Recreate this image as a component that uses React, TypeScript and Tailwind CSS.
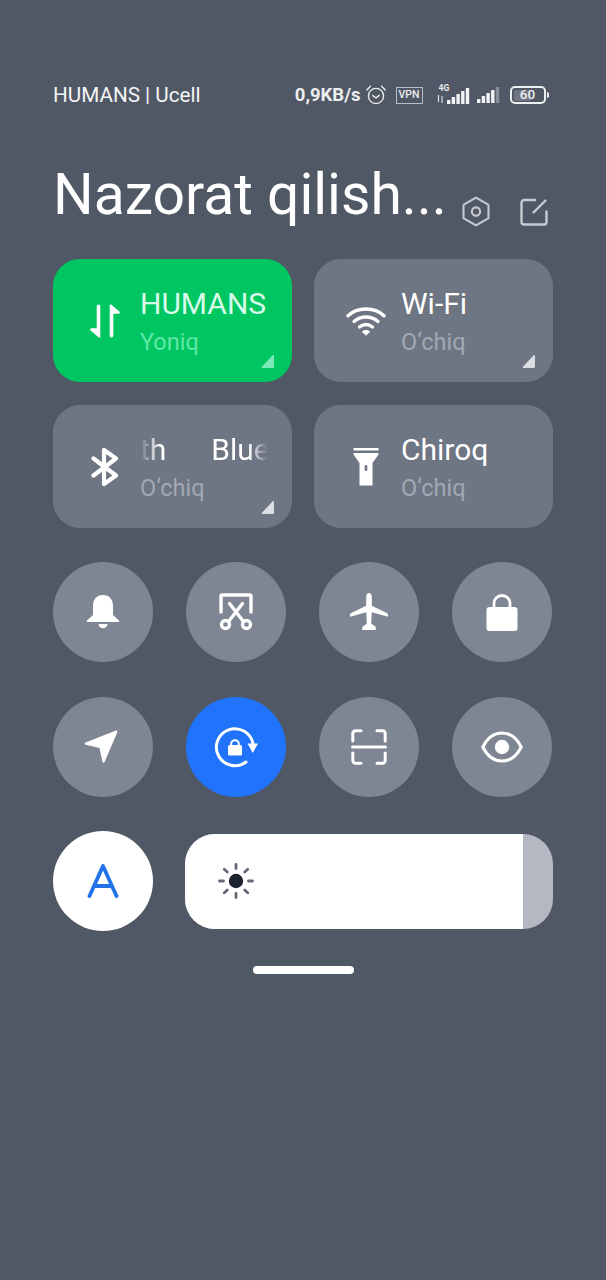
import type { ReactNode } from 'react'

function Signal({ bars, className }: { bars: number; className?: string }) {
  const heights = [4, 7, 10, 13, 16]
  return (
    <svg width="23" height="16" viewBox="0 0 23 16" className={className}>
      {heights.map((h, i) => (
        <rect
          key={i}
          x={i * 4.7}
          y={16 - h}
          width="3.4"
          height={h}
          rx="0.6"
          fill="#f2f3f5"
          opacity={i < bars ? 1 : 0.35}
        />
      ))}
    </svg>
  )
}

function StatusBar() {
  return (
    <div className="flex h-6 items-center justify-between pl-[53px] pr-[57px]">
      <span className="text-[20.7px] leading-6 text-[#f4f5f6]">HUMANS | Ucell</span>
      <div className="flex items-center text-[#eceef0]">
        <span className="text-[18.5px] font-bold leading-6">0,9KB/s</span>
        <svg width="22" height="22" viewBox="0 0 22 22" fill="none" stroke="currentColor" strokeWidth="1.4" className="ml-[4px]">
          <circle cx="11" cy="12" r="7.6" />
          <path d="M7.8 11.6 11 14l3.2-2.6M1.8 6 5.4 2.2M20.2 6l-3.6-3.8" strokeLinecap="round" strokeLinejoin="round" />
        </svg>
        <span className="ml-[9px] flex h-[17px] w-[27px] items-center justify-center border border-[#b9bdc4] text-[10.5px] font-medium leading-none">
          VPN
        </span>
        <div className="relative ml-[14px] flex h-[17px] w-[33px] items-end justify-end">
          <span className="absolute left-[2px] top-[-4px] text-[8.5px] font-bold leading-[10px]">4G</span>
          <svg width="7" height="8" viewBox="0 0 7 8" className="absolute bottom-[1px] left-0">
            <path d="M1.5 0v7M5 1v7" stroke="#d8dbdf" strokeWidth="1.2" />
          </svg>
          <Signal bars={5} />
        </div>
        <Signal bars={4} className="ml-[7px]" />
        <div className="ml-[10px] flex items-center">
          <span className="flex h-[18px] w-[36px] items-center justify-center rounded-[5px] border-2 border-[#eceef0] bg-[linear-gradient(90deg,#6f7582_60%,transparent_60%)] bg-clip-content p-[1.5px] text-[13.5px] font-medium leading-none">
            60
          </span>
          <span className="ml-[1.5px] h-[6px] w-[2px] rounded-r-sm bg-[#eceef0]" />
        </div>
      </div>
    </div>
  )
}

function Header() {
  return (
    <div className="mt-[55px] flex items-start pl-[53px]">
      <h1 className="text-[57px] font-normal leading-[66px] text-white">Nazorat qilish...</h1>
      <svg width="30" height="33" viewBox="0 0 32 34" fill="none" stroke="#c8cbd1" strokeWidth="2.2" className="ml-[14px] mt-[33px]">
        <path d="M16 2.200 28.600 9.400a1.500 1.500 0 0 1 .7 1.300v12.600a1.500 1.500 0 0 1-.7 1.300L16 31.800 3.400 24.600a1.500 1.500 0 0 1-.7-1.300V10.700a1.500 1.500 0 0 1 .7-1.300Z" strokeLinejoin="round" />
        <circle cx="16" cy="17" r="4.400" />
      </svg>
      <svg width="28" height="28" viewBox="0 0 28 28" fill="none" stroke="#c8cbd1" strokeWidth="2.400" strokeLinecap="round" className="ml-[29px] mt-[36px]">
        <path d="M15 2H4a2.500 2.500 0 0 0-2.500 2.500V24A2.500 2.500 0 0 0 4 26.500h20a2.500 2.500 0 0 0 2.500-2.500V13.500" />
        <path d="M25.500 2.500 13.500 14.500" />
      </svg>
    </div>
  )
}

function Corner({ className }: { className: string }) {
  return (
    <svg width="14" height="14" viewBox="0 0 14 14" className={`absolute bottom-[13px] right-[17px] ${className}`}>
      <path d="M13 .8V11.500a1.500 1.500 0 0 1-1.500 1.500H1.500a.8.8 0 0 1-.6-1.300L11.700.3a.8.8 0 0 1 1.300.5Z" fill="currentColor" />
    </svg>
  )
}

function Tile({
  icon,
  title,
  sub,
  on,
  corner,
}: {
  icon: ReactNode
  title: ReactNode
  sub: string
  on?: boolean
  corner?: boolean
}) {
  return (
    <div className={`relative flex h-[123px] w-[239px] items-center rounded-[27px] ${on ? 'bg-[#00c662]' : 'bg-[#6e7583]'}`}>
      <div className="flex w-[87px] shrink-0 justify-center pl-[16px] text-white">{icon}</div>
      <div className="min-w-0 flex-1 pt-[2px]">
        <div className={`h-[34px] text-[30px] leading-[34px] ${on ? 'text-[#d6fbe9]' : 'text-white'}`}>{title}</div>
        <div className={`mt-[6px] text-[23.5px] leading-[30px] ${on ? 'text-[#5fe8a8]' : 'text-[#a2a8b4]'}`}>{sub}</div>
      </div>
      {corner && <Corner className={on ? 'text-[#7ceabb]' : 'text-[#dcdee3]'} />}
    </div>
  )
}

function Round({ children, active }: { children: ReactNode; active?: boolean }) {
  return (
    <div className={`flex h-[100px] w-[100px] items-center justify-center rounded-full text-white ${active ? 'bg-[#2273fb]' : 'bg-[#7e8593]'}`}>
      {children}
    </div>
  )
}

const DataIcon = (
  <svg width="32" height="36" viewBox="0 0 32 36" fill="currentColor">
    <path d="M9.500 1.500a1.800 1.800 0 0 1 1.800 1.800V34.500h-1.400L1.600 27.500c-1-1-.3-2.300.9-2.300H7.700V3.300a1.800 1.800 0 0 1 1.800-1.800Z" />
    <path d="M22.500 34.500a1.800 1.800 0 0 1-1.800-1.800V1.500h1.400l8.300 7c1 1 .3 2.300-.9 2.300H24.300v21.900a1.800 1.800 0 0 1-1.800 1.800Z" />
  </svg>
)

const WifiIcon = (
  <svg width="40" height="32" viewBox="0 0 40 32" fill="none" stroke="currentColor" strokeWidth="3.400" strokeLinecap="round">
    <path d="M2 10.800C11.500 1.800 28.500 1.800 38 10.800" />
    <path d="M8 16.500c7-6 17-6 24 0" />
    <path d="M13.500 22c4-3 9-3 13 0" />
    <path d="M16.500 27.300a1 1 0 0 1 0-1.300c2-1.200 5-1.200 7 0a1 1 0 0 1 0 1.300l-3.500 3.500-3.500-3.500Z" fill="currentColor" stroke="none" />
  </svg>
)

const BluetoothIcon = (
  <svg width="28" height="38" viewBox="0 0 28 38" fill="none" stroke="currentColor" strokeWidth="4.200" strokeLinecap="round" strokeLinejoin="round">
    <path d="M2.500 10.500 25 27.500 13 36V2l12 8.500L2.500 27.500" />
  </svg>
)

const TorchIcon = (
  <svg width="26" height="38" viewBox="0 0 26 38" fill="currentColor">
    <rect x="0.500" y="0" width="25" height="2.500" />
    <path d="M.5 5h25v1.500L19.500 15v22.500h-13V15L.5 6.500Z" />
    <rect x="11.700" y="17" width="2.600" height="6" rx="1.300" fill="#6e7583" />
  </svg>
)

const BellIcon = (
  <svg width="34" height="36" viewBox="0 0 34 36" fill="currentColor">
    <path d="M17 1c6.500 0 10 4.800 10 10.500v9.500L33 26.600c.6.600.3 1.400-.5 1.400H1.500c-.8 0-1.100-.8-.5-1.400L7 21v-9.500C7 5.800 10.500 1 17 1Z" />
    <path d="M12.500 30h9c0 2.500-2 4.200-4.500 4.200S12.500 32.500 12.500 30Z" />
  </svg>
)

const ScissorIcon = (
  <svg width="34" height="38" viewBox="0 0 34 38" fill="none" stroke="currentColor" strokeWidth="3.400" strokeLinecap="round">
    <path d="M2 19V3.500A1.500 1.500 0 0 1 3.500 2h27A1.500 1.500 0 0 1 32 3.500V19" />
    <path d="M10.500 10.500 24 28M23.500 10.500 10 28" />
    <circle cx="6.500" cy="31.500" r="4" />
    <circle cx="27.500" cy="31.500" r="4" />
  </svg>
)

const PlaneIcon = (
  <svg width="38" height="38" viewBox="0 0 38 38" fill="currentColor">
    <path d="M19 0c1.800 0 2.800 2 2.800 4v8.700l15 7.200c.8.400 1.200 1 1.200 1.800v2.100L21.800 19.300l-.6 11.200 4 2.900c.4.300.6.700.6 1.100V37H12.200v-2.500c0-.4.200-.8.600-1.100l4-2.900-.6-11.200L0 23.800v-2.100c0-.8.400-1.400 1.200-1.800l15-7.200V4c0-2 1-4 2.800-4Z" />
  </svg>
)

const LockIcon = (
  <svg width="32" height="37" viewBox="0 0 32 37" fill="currentColor">
    <rect x="0.500" y="13" width="31" height="24" rx="3" />
    <path d="M8 14V9.500a8 8 0 0 1 16 0V14" fill="none" stroke="currentColor" strokeWidth="2.800" />
  </svg>
)

const NavIcon = (
  <svg width="34" height="34" viewBox="0 0 34 34" fill="currentColor" className="mr-[4px]">
    <path d="M32 .6c1-.3 1.700.4 1.400 1.400L20.600 32c-.4 1.200-2 1-2.200-.2L15.500 18 1.700 14.800C.5 14.500.3 13 1.500 12.600Z" />
  </svg>
)

const RotateIcon = (
  <svg width="44" height="42" viewBox="0 0 44 42" fill="none" stroke="currentColor" strokeWidth="3" strokeLinecap="round">
    <path d="M32 36A18.500 18.500 0 1 1 39 17.500" />
    <path d="M33.500 17.500h10.500l-5.200 9.500-5.300-9.500Z" fill="currentColor" stroke="none" />
    <rect x="14" y="19" width="14" height="10.500" rx="1.500" fill="currentColor" stroke="none" />
    <path d="M17.200 19.500v-1.500a3.800 3.800 0 0 1 7.600 0v1.500" strokeWidth="2" />
  </svg>
)

const ScanIcon = (
  <svg width="36" height="36" viewBox="0 0 36 36" fill="none" stroke="currentColor" strokeWidth="3" strokeLinecap="round" strokeLinejoin="round">
    <path d="M1.800 12V4.500a2.700 2.700 0 0 1 2.700-2.700H10M26 1.800h5.500a2.700 2.700 0 0 1 2.700 2.700V12M1.500 18h33M1.800 24v7.500a2.700 2.700 0 0 0 2.700 2.700H10M26 34.200h5.500a2.700 2.700 0 0 0 2.700-2.700V24" />
  </svg>
)

const EyeIcon = (
  <svg width="42" height="32" viewBox="0 0 42 32" fill="none" stroke="currentColor" strokeWidth="3">
    <path d="M1.800 16C6 7.500 13 2 21 2s15 5.500 19.200 14C36 24.500 29 30 21 30S6 24.500 1.800 16Z" strokeLinejoin="round" />
    <circle cx="21" cy="16" r="7.200" fill="currentColor" stroke="none" />
  </svg>
)

const SunIcon = (
  <svg width="36" height="36" viewBox="0 0 36 36" fill="none" stroke="#636875" strokeWidth="2.800" strokeLinecap="round">
    <path d="M18 1.500v4M18 30.500v4M1.500 18h4M30.500 18h4M6.300 6.300l3 2.800M26.700 26.900l3 2.800M6.300 29.700l3-2.800M26.700 9.100l3-2.800" />
    <circle cx="18" cy="18" r="7.200" fill="#1e2330" stroke="none" />
  </svg>
)

export default function App() {
  return (
    <div className="h-[1280px] w-[606px] overflow-hidden bg-[#515865] pt-[83px] font-['Roboto',sans-serif]">
      <StatusBar />
      <Header />

      <div className="mt-[31px] grid grid-cols-[239px_239px] gap-x-[22px] gap-y-[23px] pl-[53px]">
        <Tile on corner icon={DataIcon} title="HUMANS" sub="Yoniq" />
        <Tile corner icon={WifiIcon} title="Wi-Fi" sub="O‘chiq" />
        <Tile
          corner
          icon={BluetoothIcon}
          sub="O‘chiq"
          title={
            <div className="flex w-[128px] overflow-hidden [mask-image:linear-gradient(to_right,transparent_0,black_20px,black_calc(100%-20px),transparent_100%)]">
              <span>th</span>
              <span className="ml-[45px]">Blue</span>
            </div>
          }
        />
        <Tile icon={TorchIcon} title="Chiroq" sub="O‘chiq" />
      </div>

      <div className="mt-[34px] grid grid-cols-[repeat(4,100px)] gap-x-[33px] gap-y-[35px] pl-[53px]">
        <Round>{BellIcon}</Round>
        <Round>{ScissorIcon}</Round>
        <Round>{PlaneIcon}</Round>
        <Round>{LockIcon}</Round>
        <Round>{NavIcon}</Round>
        <Round active>{RotateIcon}</Round>
        <Round>{ScanIcon}</Round>
        <Round>{EyeIcon}</Round>
      </div>

      <div className="mt-[34px] flex items-center pl-[53px]">
        <div className="flex h-[100px] w-[100px] items-center justify-center rounded-full bg-white">
          <svg width="32" height="34" viewBox="0 0 32 34" fill="none" stroke="#2273e8" strokeWidth="3.800" strokeLinecap="round" strokeLinejoin="round">
            <path d="M2.500 32 16 2l13.500 30M7.500 22h17" />
          </svg>
        </div>
        <div className="ml-[32px] flex h-[95px] w-[368px] overflow-hidden rounded-[30px] bg-[#b5b8c3]">
          <div className="flex w-[338px] items-center bg-white pl-[33px]">{SunIcon}</div>
        </div>
      </div>

      <div className="mx-auto mt-[35px] h-2 w-[101px] rounded-full bg-white" />
    </div>
  )
}
